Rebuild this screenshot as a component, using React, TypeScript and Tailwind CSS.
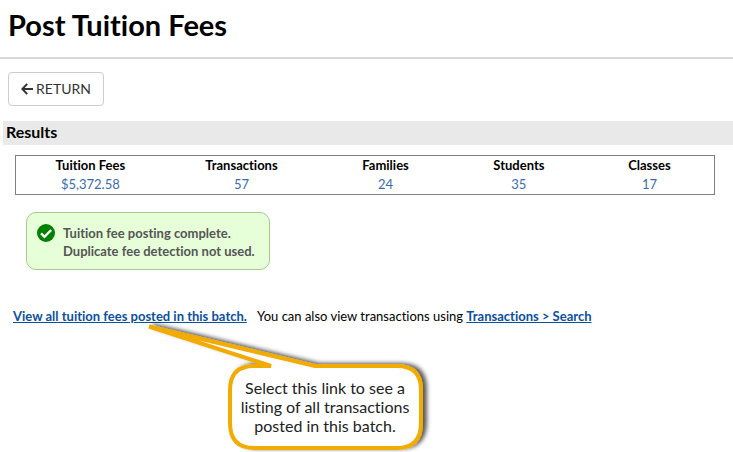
import React from "react";

const results = [
  { label: "Tuition Fees", value: "$5,372.58", width: "w-[21.3%]" },
  { label: "Transactions", value: "57", width: "w-[22%]" },
  { label: "Families", value: "24", width: "w-[19.3%]" },
  { label: "Students", value: "35", width: "w-[18.9%]" },
  { label: "Classes", value: "17", width: "w-[18.5%]" },
];

function ReturnArrow() {
  return (
    <svg viewBox="0 0 12 12" className="h-3 w-3" fill="none" stroke="#333" strokeWidth="2" aria-hidden="true">
      <path d="M6.2 0.9 1.3 6l4.9 5.1M1.5 6H12" />
    </svg>
  );
}

function SuccessIcon() {
  return (
    <svg viewBox="0 0 18 18" className="h-[18px] w-[18px] shrink-0" aria-hidden="true">
      <circle cx="9" cy="9" r="9" fill="#008000" />
      <path d="M4 9.3 7.5 12.8 14.2 6" fill="none" stroke="#fff" strokeWidth="2.4" />
    </svg>
  );
}

function Callout() {
  return (
    <aside className="absolute left-[136px] top-[10px] h-[140px] w-[300px]">
      <svg viewBox="0 0 300 140" className="absolute inset-0 h-full w-full overflow-visible" aria-hidden="true">
        <defs>
          <filter id="callout-shadow" x="-10%" y="-10%" width="125%" height="125%">
            <feDropShadow dx="4" dy="-1" stdDeviation="2" floodColor="#000" floodOpacity="0.65" />
          </filter>
        </defs>
        <path
          d="M13 10.5 179 50H261Q285 50 285 74V107Q285 132 261 132H118Q94 132 94 107V74Q94 50 118 50H135Z"
          fill="#fff"
          stroke="#f2ab00"
          strokeWidth="4"
          strokeLinejoin="bevel"
          filter="url(#callout-shadow)"
        />
      </svg>
      <p className="absolute left-24 top-[62px] w-[186px] text-center text-base leading-[19px] text-[#222]">
        Select this link to see a<br />listing of all transactions<br />posted in this batch.
      </p>
    </aside>
  );
}

export default function App() {
  return (
    <div className="min-h-screen overflow-x-hidden bg-white font-['Lato',sans-serif] text-sm text-black [font-variant-ligatures:none]">
      <header className="border-b-2 border-[#d8d8d8] px-2 pb-[14px] pt-[7px]">
        <h1 className="text-[29px] font-bold leading-9">Post Tuition Fees</h1>
      </header>
      <main>
        <div className="px-2 pb-[15px] pt-[13px]">
          <button type="button" className="flex h-[34px] w-24 items-center justify-center gap-[3px] rounded-[4px] border border-[#ccc] bg-white text-sm text-[#333]">
            <ReturnArrow />
            RETURN
          </button>
        </div>
        <h2 className="ml-[3px] h-6 bg-[#e9e9e9] pl-[3px] text-base font-bold leading-[21px]">Results</h2>
        <div className="ml-[15px] mr-[18px] mt-[10px] border border-[#808080]">
          <table className="w-full table-fixed text-center text-[13px] leading-[19px]">
            <thead>
              <tr>
                {results.map((r) => (
                  <th key={r.label} scope="col" className={`${r.width} p-0 font-bold`}>{r.label}</th>
                ))}
              </tr>
            </thead>
            <tbody>
              <tr className="text-[#3a6cad]">
                {results.map((r) => (
                  <td key={r.label} className="p-0">{r.value}</td>
                ))}
              </tr>
            </tbody>
          </table>
        </div>
        <div role="status" className="ml-[26px] mt-[17px] flex w-fit gap-2 rounded-[10px] border border-[#a6ca8a] bg-[#e6ffd9] pb-[9px] pl-[10px] pr-[14px] pt-[11px] text-[13px] font-bold leading-[18px] text-[#555]">
          <SuccessIcon />
          <p>Tuition fee posting complete.<br />Duplicate fee detection not used.</p>
        </div>
        <div className="relative mt-9 px-[13px]">
          <p className="text-[13px] leading-5">
            <a href="#batch" className="mr-1 font-bold text-[#0b4f9e] underline">View all tuition fees posted in this batch.</a>
            &nbsp; You can also view transactions using{" "}
            <a href="#search" className="font-bold text-[#0b4f9e] underline">Transactions &gt; Search</a>
          </p>
          <Callout />
        </div>
      </main>
    </div>
  );
}
